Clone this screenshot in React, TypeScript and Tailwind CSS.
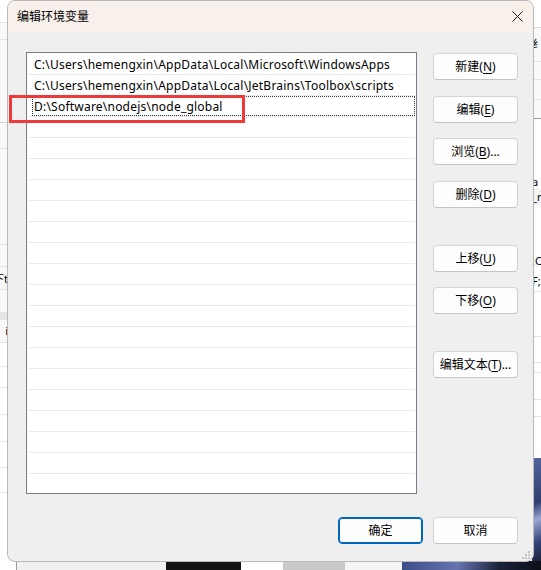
import React from "react";

const paths = [
  "C:\\Users\\hemengxin\\AppData\\Local\\Microsoft\\WindowsApps",
  "C:\\Users\\hemengxin\\AppData\\Local\\JetBrains\\Toolbox\\scripts",
  "D:\\Software\\nodejs\\node_global",
];

const sideButtons = [
  { label: "新建", key: "N", tail: "", mt: "mt-0" },
  { label: "编辑", key: "E", tail: "", mt: "mt-[16px]" },
  { label: "浏览", key: "B", tail: "...", mt: "mt-[15px]" },
  { label: "删除", key: "D", tail: "", mt: "mt-[16px]" },
  { label: "上移", key: "U", tail: "", mt: "mt-[37px]" },
  { label: "下移", key: "O", tail: "", mt: "mt-[15px]" },
  { label: "编辑文本", key: "T", tail: "...", mt: "mt-[37px]" },
];

function WinButton({
  children,
  primary,
  className = "",
}: {
  children: React.ReactNode;
  primary?: boolean;
  className?: string;
}) {
  return (
    <button
      className={
        "h-[27px] w-[85px] rounded-[4px] bg-[#fdfdfd] text-[12px] text-black flex items-center justify-center " +
        (primary
          ? "border border-[#0067c0] shadow-[inset_0_0_0_1px_#0067c0] "
          : "border border-[#d4d4d4] border-b-[#c4c4c4] ") +
        className
      }
    >
      {children}
    </button>
  );
}

function Backdrop() {
  return (
    <>
      {/* window behind, left edge */}
      <div className="absolute left-0 top-0 w-[8px] h-full bg-[#f9f9f9] flex flex-col overflow-hidden">
        <div className="h-[23px] border-b border-[#e3e3e3] bg-white" />
        <div className="h-[17px] border-b border-[#e3e3e3]" />
        <div className="h-[83px] border-b border-[#d0d0d0]" />
        <div className="h-[26px] border-b border-[#e3e3e3]" />
        <div className="h-[96px] border-b border-[#e3e3e3]" />
        <div className="h-[22px] border-b border-[#e3e3e3]" />
        <div className="h-[23px] border-b border-[#e3e3e3] flex items-center justify-end text-[11px] leading-none whitespace-nowrap">
          下t
        </div>
        <div className="h-[30px] border-b-[8px] border-[#e6e6e6]" />
        <div className="h-[23px] border-b border-[#e3e3e3] flex items-center justify-end text-[11px] whitespace-nowrap">
          i
        </div>
        <div className="h-[24px] border-b border-[#e9e9e9] bg-white" />
        <div className="h-[21px] border-b border-[#e9e9e9] bg-white" />
        <div className="h-[27px] border-b border-[#e9e9e9] bg-white" />
        <div className="h-[27px] border-b border-[#e9e9e9] bg-white" />
        <div className="h-[26px] border-b border-[#e9e9e9] bg-white" />
        <div className="h-[25px] border-b border-[#e9e9e9] bg-white" />
        <div className="flex-1 bg-white" />
      </div>

      {/* window behind, right edge */}
      <div className="absolute right-0 top-0 w-[9px] h-full bg-[#f9f9f9] flex flex-col overflow-hidden">
        <div className="h-[28px] border-b border-[#d8d8d8] bg-white" />
        <div className="h-[34px] border-b border-[#e3e3e3] flex items-center text-[11px] whitespace-nowrap">
          纟
        </div>
        <div className="h-[18px] border-b border-[#e3e3e3]" />
        <div className="h-[20px] border-b border-[#e3e3e3]" />
        <div className="h-[19px] border-b border-[#9a9a9a]" />
        <div className="h-[55px] bg-white" />
        <div className="h-[15px] text-[11px] leading-[15px] whitespace-nowrap bg-white">a</div>
        <div className="h-[16px] text-[11px] leading-[16px] whitespace-nowrap bg-[#f3f3f3]">_r</div>
        <div className="h-[47px] bg-white" />
        <div className="h-[18px] text-[11px] leading-[18px] whitespace-nowrap bg-white">:C</div>
        <div className="h-[22px] border-b border-[#e3e3e3] text-[11px] leading-[22px] whitespace-nowrap bg-white">
          F;
        </div>
        <div className="h-[45px] border-b border-[#e3e3e3] bg-white" />
        <div className="h-[26px] border-b border-[#e3e3e3] bg-white" />
        <div className="h-[10px] border-b border-[#e3e3e3] bg-white" />
        <div className="h-[27px] border-b border-[#e3e3e3] bg-white" />
        <div className="h-[17px] border-b border-[#e3e3e3] bg-white" />
        <div className="h-[41px] bg-white" />
        <div className="flex-1 bg-[linear-gradient(160deg,#5466a0_0%,#2f3e6e_40%,#9aa6d2_55%,#34437a_75%,#101522_100%)]" />
      </div>

      {/* bottom strip of the windows behind */}
      <div className="absolute left-0 bottom-0 w-full h-[9px] flex">
        <div className="w-[17px] bg-white border-r border-[#9a9a9a]" />
        <div className="w-[149px] bg-[#f0f0f0]" />
        <div className="w-[75px] bg-[#121212]" />
        <div className="w-[42px] bg-white" />
        <div className="w-[62px] bg-[#c9c9c9]" />
        <div className="w-[57px] bg-[#f5f5f5]" />
        <div className="flex-1 bg-[linear-gradient(100deg,#3c4c86,#6674b0_40%,#1b2238_70%,#0c0f18)]" />
      </div>
    </>
  );
}

export default function App() {
  const rows = Array.from({ length: 21 }, (_, i) => paths[i] ?? "");

  return (
    <div className="relative w-[541px] h-[570px] overflow-hidden bg-[#f9f9f9] font-['Noto_Sans','Noto_Sans_CJK_SC',sans-serif] text-[12px] text-black">
      <Backdrop />

      {/* 编辑环境变量 dialog */}
      <div className="absolute left-[7px] top-0 w-[527px] h-[562px] rounded-[8px] border border-[#b9b9b9] bg-[#efefef] flex flex-col overflow-hidden">
        <div className="h-[31px] shrink-0 bg-[#f8f0ea] flex items-center justify-between pl-[9px] pr-[9px]">
          <span className="text-[12px] leading-none">编辑环境变量</span>
          <svg width="11" height="11" viewBox="0 0 11 11" className="mr-[1px]">
            <path d="M0.5 0.5 L10.5 10.5 M10.5 0.5 L0.5 10.5" stroke="#1b1b1b" strokeWidth="1" />
          </svg>
        </div>

        <div className="flex-1 flex flex-col pl-[18px] pr-[14px] pt-[20px]">
          <div className="flex gap-[16px]">
            {/* path list */}
            <div className="w-[391px] h-[442px] border border-[#7b7b8c] bg-white overflow-hidden pt-[1px]">
              {rows.map((p, i) => (
                <div key={i} className="h-[21px] px-[1px] flex flex-col">
                  <div
                    className={
                      "h-[20px] ml-[4px] pl-[1px] pt-[1px] flex items-center whitespace-nowrap leading-none tracking-[0.22px] " +
                      (i === 2 ? "border border-dotted border-[#333]" : "border border-transparent")
                    }
                  >
                    {p}
                  </div>
                  <div className="h-[1px] bg-[#ebebeb]" />
                </div>
              ))}
            </div>

            {/* side buttons */}
            <div className="flex flex-col pt-[1px]">
              {sideButtons.map((b) => (
                <WinButton key={b.key} className={b.mt}>
                  {b.label}(<span className="underline underline-offset-2">{b.key}</span>){b.tail}
                </WinButton>
              ))}
            </div>
          </div>

          <div className="flex justify-end gap-[10px] mt-[23px] pr-[1px]">
            <WinButton primary>确定</WinButton>
            <WinButton>取消</WinButton>
          </div>
        </div>

        {/* size grip */}
        <svg width="9" height="9" viewBox="0 0 9 9" className="absolute right-[3px] bottom-[2px]">
          <rect x="7" y="1" width="2" height="2" fill="#c4c4c4" />
          <rect x="4" y="4" width="2" height="2" fill="#c4c4c4" />
          <rect x="7" y="4" width="2" height="2" fill="#c4c4c4" />
          <rect x="1" y="7" width="2" height="2" fill="#c4c4c4" />
          <rect x="4" y="7" width="2" height="2" fill="#c4c4c4" />
          <rect x="7" y="7" width="2" height="2" fill="#c4c4c4" />
        </svg>
      </div>

      {/* red annotation box */}
      <div className="absolute left-[9px] top-[95px] w-[236px] h-[28px] border-[3px] border-[#f03a3a]" />
    </div>
  );
}
